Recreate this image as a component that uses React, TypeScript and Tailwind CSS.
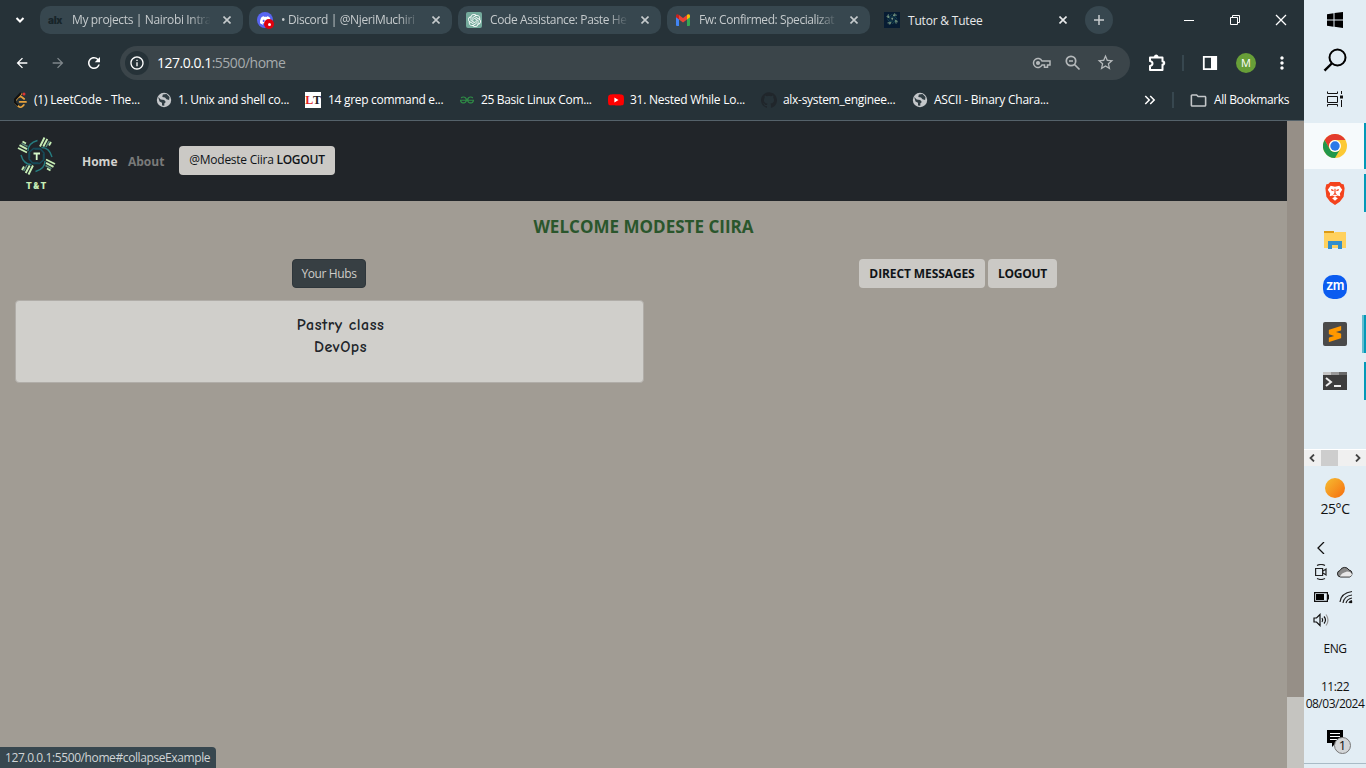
import React from "react";
import { MdArrowBack, MdArrowForward, MdRefresh, MdOutlineInfo, MdStarBorder, MdMoreVert, MdOutlineFolder, MdKeyboardDoubleArrowRight } from "react-icons/md";
import { SiGithub, SiYoutube, SiOpenai, SiDiscord, SiGeeksforgeeks, SiLeetcode, SiSublimetext } from "react-icons/si";

const Cross = ({ className = "" }: { className?: string }) => (
  <svg viewBox="0 0 8 8" className={`h-2 w-2 shrink-0 ${className}`} stroke="currentColor" strokeWidth="1.6" fill="none">
    <path d="M.5.5l7 7M7.5.5l-7 7" />
  </svg>
);

const Gmail = () => (
  <svg viewBox="0 0 16 12" className="h-3 w-4">
    <path d="M1 2v9a1 1 0 0 0 1 1h2V5z" fill="#4285f4" />
    <path d="M12 12h2a1 1 0 0 0 1-1V2l-3 3z" fill="#34a853" />
    <path d="M12 1.5v4L15 3.300V1.800C15 .2 13.300-.4 12 .8z" fill="#fbbc04" />
    <path d="M4 5.500V1l4 3 4-3v4.500L8 8.500z" fill="#ea4335" />
    <path d="M1 1.800v1.500l3 2.200V1C2.700-.3 1 .2 1 1.800z" fill="#c5221f" />
  </svg>
);

const Logo = ({ className = "" }: { className?: string }) => (
  <svg viewBox="0 0 40 40" className={className} fill="none">
    {[0, 90, 180, 270].map((a) => (
      <g key={a} transform={`rotate(${a} 20.500 20)`}>
        <path d="M24 10.500l4.500-9M27.300 10.500l4-7.500M33 9.500l2-3.500" stroke="#c6edb5" strokeWidth="1.900" />
        <path d="M30 11l3.200-6" stroke="#5d8a7c" strokeWidth="1.500" />
        <path d="M12 15C12 9 16 6 21.500 4.500" stroke="#267d80" strokeWidth="1.400" />
        <path d="M13.500 22v-6l4-3.500H24" stroke="#174b59" strokeWidth="1.500" />
      </g>
    ))}
    <path d="M17.500 17.500h6.500M20.700 17.500V24" stroke="#d6f7c8" strokeWidth="1.800" />
  </svg>
);

const Chrome = () => (
  <svg viewBox="0 0 24 24" className="h-6 w-6">
    <circle cx="12" cy="12" r="12" fill="#fcc934" />
    <path d="M1.600 6A12 12 0 0 1 22.400 6H12a6 6 0 0 0-5.200 9z" fill="#e33b2e" />
    <path d="M1.600 6A12 12 0 0 0 12 24l5.200-9A6 6 0 0 1 6.800 15z" fill="#22974b" />
    <circle cx="12" cy="12" r="6" fill="#fff" />
    <circle cx="12" cy="12" r="4.700" fill="#2979e8" />
  </svg>
);

const Alx = () => <span className="w-4 font-['Inter'] text-[10px] font-black leading-none tracking-[-.3px] text-[#18252a]">alx</span>;
const DiscordIcon = () => (
  <span className="relative flex h-4 w-4 items-center justify-center rounded-full bg-[#5865f2]">
    <SiDiscord size={11} color="#fff" />
    <span className="absolute -bottom-px -right-px flex h-[10px] w-[10px] items-center justify-center rounded-full bg-[#e0000d]"><span className="h-[3px] w-[3px] rounded-full bg-white" /></span>
  </span>
);
const OpenAi = () => <span className="flex h-4 w-4 items-center justify-center rounded-[2px] bg-[#74aa9c]"><SiOpenai size={13} color="#fff" /></span>;

const tabs = [
  { icon: <Alx />, text: "My projects | Nairobi Intra", cls: "tracking-[-.35px]" },
  { icon: <DiscordIcon />, text: "• Discord | @NjeriMuchiri", cls: "tracking-[-.37px]" },
  { icon: <OpenAi />, text: "Code Assistance: Paste He", cls: "tracking-[-.38px]" },
  { icon: <Gmail />, text: "Fw: Confirmed: Specializat", cls: "tracking-[-.42px]" },
];

const Globe = () => (
  <svg viewBox="0 0 16 16" className="h-4 w-4">
    <circle cx="8" cy="8" r="7.200" fill="#c4c7ca" />
    <path d="M2.200 5l2.500 2.500 3.500.6 1.600 1.900-1.500 1.500v2.300L6 13.500v-2.700L3.500 9.500zM6.800 2.500L10.500 2l3 3-.4 3-2.600-.8L9 5.500 6.300 5z" fill="#303d43" />
  </svg>
);
const Leet = () => (
  <span className="relative flex h-4 w-4 items-center justify-center"><SiLeetcode size={15} color="#e7a33e" />
    <svg viewBox="0 0 16 16" className="absolute inset-0"><path d="M9 1L3 7.500v3l3 3" stroke="#111" strokeWidth="2" fill="none" /><circle cx="12" cy="2" r="1.500" fill="#d33" /></svg>
  </span>
);
const LT = () => <span className="flex h-4 w-4 items-center justify-center bg-white font-['Liberation_Serif'] text-[12px] font-bold leading-none text-[#222]"><span className="text-[#e21e1e]">L</span>T</span>;

const bookmarks = [
  { icon: <Leet />, text: "(1) LeetCode - The...", cls: "w-[144px] tracking-[-.2px]", gap: "mr-[6px]" },
  { icon: <Globe />, text: "1. Unix and shell co...", cls: "w-[149px] tracking-[-.28px]", gap: "mr-[6px]" },
  { icon: <LT />, text: "14 grep command e...", cls: "w-[154px] tracking-[-.3px]", gap: "mr-[7px]" },
  { icon: <SiGeeksforgeeks size={14} color="#2f8d46" />, text: "25 Basic Linux Com...", cls: "w-[149px] tracking-[-.33px]", gap: "mr-[6px]" },
  { icon: <SiYoutube size={16} color="#f00" className="bg-[linear-gradient(#fff,#fff)] bg-[length:6px_6px] bg-center bg-no-repeat" />, text: "31. Nested While Lo...", cls: "w-[153px] tracking-[-.24px]", gap: "mr-[6px]" },
  { icon: <SiGithub size={16} color="#20262b" />, text: "alx-system_enginee...", cls: "w-[151px] tracking-[-.3px]", gap: "mr-[6px]" },
  { icon: <Globe />, text: "ASCII - Binary Chara...", cls: "w-[150px] tracking-[-.23px]", gap: "mr-[6px]" },
];

function TabStrip() {
  return (
    <div className="flex h-10 items-center pl-3 text-[12px]">
      <svg viewBox="0 0 16 16" className="mr-3 h-4 w-4" fill="none" stroke="#fff" strokeWidth="2"><path d="M4.500 6L8 9.500 11.500 6" /></svg>
      <div className="flex gap-1.5">
        {tabs.map((t) => (
          <div key={t.text} className="flex h-7 w-[203px] items-center rounded-[10px] bg-[#37474f] pl-2 pr-3 text-[#c5cacc]">
            <span className="flex w-4 shrink-0 justify-center">{t.icon}</span>
            <span className={`ml-2 w-[140px] shrink-0 whitespace-nowrap [mask-image:linear-gradient(90deg,#000_84%,transparent_99%)] ${t.cls}`}>{t.text}</span>
            <Cross className="ml-auto" />
          </div>
        ))}
      </div>
      <div className="flex h-7 w-[215px] items-center pl-[14px] pr-4 text-[#e8eaeb]">
        <span className="h-4 w-4 bg-[#071c33] pt-px"><Logo className="mx-auto h-3 w-3" /></span>
        <span className="ml-2 pt-px tracking-[-.2px]">Tutor &amp; Tutee</span>
        <Cross className="ml-auto mr-[2px]" />
      </div>
      <div className="flex h-7 w-7 items-center justify-center rounded-full bg-[#37474f]">
        <svg viewBox="0 0 10 10" className="h-2.5 w-2.5" stroke="#c9cdcf" strokeWidth="1.500"><path d="M5 0v10M0 5h10" /></svg>
      </div>
      <svg viewBox="0 0 104 12" className="ml-[71px] h-3 w-[104px]" fill="none" stroke="#fff"><path d="M0 6.500h10M46.500 3.500h7v7h-7zM48.500 3.500v-2h7v7h-2" /><path d="M92 1l10 10M102 1l-10 10" strokeWidth="1.300" /></svg>
    </div>
  );
}

function Toolbar() {
  return (
    <div className="flex h-[46px] items-center pl-[14px]">
      <MdArrowBack size={16} color="#fff" stroke="#fff" />
      <MdArrowForward size={16} color="#7f878b" className="ml-5" />
      <MdRefresh size={18} color="#fff" className="ml-[19px]" />
      <div className="ml-[17px] flex h-[34px] w-[1010px] items-center rounded-full bg-[#3b454a] pl-[5px] pr-[15px]">
        <span className="flex h-6 w-6 items-center justify-center rounded-full bg-[#263238]"><MdOutlineInfo size={16} color="#fff" /></span>
        <span className="-mt-px ml-2 text-[14px] tracking-[-.49px] text-[#a6abad]"><span className="text-white">127.0.0.1</span>:5500/home</span>
        <svg viewBox="0 0 20 12" className="ml-auto h-3 w-5" fill="none" stroke="#b5b9bb" strokeWidth="1.500"><path d="M10 4A4.500 4.500 0 1 0 10 8h2.500v2.200h3V8H18V4z" /><circle cx="6" cy="6" r="1.300" fill="#b5b9bb" /></svg>
        <svg viewBox="0 0 16 16" className="ml-[13px] h-4 w-4" fill="none" stroke="#b5b9bb" strokeWidth="1.700"><circle cx="6" cy="6" r="4.700" /><path d="M9.500 9.500l5 5M4 6h4" /></svg>
        <MdStarBorder size={19} color="#b5b9bb" className="-mt-px ml-[15px]" />
      </div>
      <svg viewBox="0 0 18 18" className="ml-[18px] h-[18px] w-[18px]" fill="none" stroke="#fff" strokeWidth="2"><path d="M2 3.500h12.500v4h1q1.500 1.500 0 3h-1v5.500H2v-4q2.500-.5 2.500-2.500T2 7z" strokeLinejoin="round" /><path d="M6.500 3q1.700-3 3.400 0" fill="#fff" /></svg>
      <span className="ml-4 h-4 w-0.5 bg-[#37474f]" />
      <svg viewBox="0 0 16 16" className="ml-[18px] h-4 w-4"><path d="M1.800 1.800h12.400v12.400H1.800z" fill="none" stroke="#fff" strokeWidth="1.800" /><path d="M9 1h6v14H9z" fill="#fff" /></svg>
      <span className="ml-[18px] flex h-5 w-5 items-center justify-center rounded-full bg-[#689f38] text-[11px] text-white">M</span>
      <MdMoreVert size={20} color="#fff" className="ml-4" />
    </div>
  );
}

function Bookmarks() {
  return (
    <div className="flex h-[34px] items-center pb-[7px] pl-[12px] pt-px text-[12px] text-white">
      {bookmarks.map((b) => (
        <div key={b.text} className={`flex shrink-0 items-center whitespace-nowrap ${b.cls}`}>
          <span className={`flex w-4 shrink-0 justify-center ${b.gap}`}>{b.icon}</span>{b.text}
        </div>
      ))}
      <MdKeyboardDoubleArrowRight size={18} className="ml-[79px] shrink-0" />
      <span className="ml-[13px] h-4 w-0.5 shrink-0 bg-[#37474f]" />
      <MdOutlineFolder size={19} color="#c4c7c9" className="ml-[15px] shrink-0" />
      <span className="ml-[6px] whitespace-nowrap tracking-[-.38px]">All Bookmarks</span>
    </div>
  );
}

function Page() {
  return (
    <div className="flex h-[647px]">
      <main className="relative flex w-[1287px] flex-col bg-[#a19c94]">
        <nav className="flex h-20 items-center bg-[#212529]">
          <div className="ml-4 flex w-10 flex-col items-center pt-[5px]">
            <Logo className="h-10 w-10" />
            <span className="mt-[4px] h-3 pl-0.5 font-['Inter'] text-[8.500px] font-black leading-3 tracking-[1.700px] text-[#c6edb5]">T&amp;T</span>
          </div>
          <span className="ml-[26px] w-[46px] pt-0.5 text-[12px] font-bold text-[#d3d2cf]">Home</span>
          <span className="w-[51px] pt-0.5 text-[12px] font-bold text-[#797a79]">About</span>
          <button className="-mt-0.5 h-[29px] w-[156px] whitespace-nowrap rounded bg-[#cbc9c5] text-[12px] tracking-[-.26px] text-[#101418]">@Modeste Ciira <span className="font-semibold">LOGOUT</span></button>
        </nav>
        <h1 className="mt-[14px] text-center text-[17px] font-bold leading-6 tracking-[.02px] text-[#2a562c]">WELCOME MODESTE CIIRA</h1>
        <div className="mt-5 flex h-[29px]">
          <button className="ml-[292px] w-[74px] whitespace-nowrap rounded border border-[#2e363b] bg-[#373f43] text-[12px] tracking-[-.37px] text-[#cfcdc9]">Your Hubs</button>
          <button className="ml-[493px] w-[126px] whitespace-nowrap rounded bg-[#cbc9c5] text-[12px] font-bold tracking-[-.1px] text-[#101418]">DIRECT MESSAGES</button>
          <button className="ml-[3px] w-[69px] rounded bg-[#cbc9c5] text-[12px] font-bold tracking-[-.3px] text-[#101418]">LOGOUT</button>
        </div>
        <section className="ml-[15px] mt-3 h-[83px] w-[629px] rounded border border-[#b0ada8] bg-[#d0cfcb] pl-[22px] pt-[13px] text-center font-['Comic_Neue','Comic_Sans_MS','Lato',sans-serif] text-[16px] font-bold leading-[22px] tracking-[.5px] text-[#212529]">
          <p>Pastry class</p>
          <p>DevOps</p>
        </section>
        <div className="absolute bottom-0 left-0 flex h-[21px] w-[216px] items-center whitespace-nowrap rounded-tr bg-[#37474f] pl-[5px] text-[12px] tracking-[-.4px] text-[#d0d4d6]">127.0.0.1:5500/home#collapseExample</div>
      </main>
      <div className="flex w-[17px] flex-col justify-end bg-[#968f87]"><div className="h-[71px] bg-[#c5c4c0]" /></div>
    </div>
  );
}

const Row = ({ children, className = "" }: { children: React.ReactNode; className?: string }) => (
  <div className={`flex w-[62px] shrink-0 items-center justify-center ${className}`}>{children}</div>
);

function Taskbar() {
  return (
    <aside className="flex h-[768px] w-[62px] flex-col bg-[#e2edf4] text-[#111]">
      <Row className="h-10"><svg viewBox="0 0 16 16" className="h-4 w-4"><path d="M0 2.200l6.500-1V7.500H0zM7.500 1L16 0v7.500H7.500zM0 8.500h6.500v6.300L0 13.800zM7.500 8.500H16V16l-8.500-1.200z" /></svg></Row>
      <Row className="h-10"><svg viewBox="0 0 24 24" className="h-6 w-6" fill="none" stroke="#000" strokeWidth="2"><circle cx="14.500" cy="9.500" r="8" /><path d="M8.700 15.500L1.500 22.700" strokeWidth="2.400" /></svg></Row>
      <Row className="h-[43px] pb-[5px]"><svg viewBox="0 0 16 16" className="h-4 w-4" fill="none" stroke="#111"><path d="M.5.5v2h10v-2M.5 5.500h10v6H.5zM.5 15.500v-2h10v2M14.500 0v3M14.500 9v7" /><path d="M13 4.500h3v3h-3z" fill="#111" stroke="none" /></svg></Row>
      <Row className="h-[46px] border-r-2 border-[#0399b8] bg-[#f6fafc] pl-0.5"><Chrome /></Row>
      <Row className="mt-[5px] h-[38px] border-r-2 border-[#0399b8] pl-0.5">
        <svg viewBox="0 0 22 25" className="h-6 w-[22px]"><path d="M6 1h10l2 2 2 .5 1 4-1 9-4 5-5 3.500-5-3.500-4-5-1-9 1-4L4 3z" fill="#f4431d" /><path d="M6.500 5l4.500 1 4.500-1 3 4-2.500 4 .5 3-3-1-2.500 1.500L8.500 15l-3 1 .5-3-2.500-4zM8 18l3-1.500 3 1.500-3 2.500z" fill="#fff" /><path d="M7 9l2.500 1M15 9l-2.500 1M11 8v5l-1.500 1.500M11 13l1.500 1.500" stroke="#f4431d" strokeWidth="1.200" fill="none" /></svg>
      </Row>
      <Row className="h-[56px]"><svg viewBox="0 0 22 18" className="h-[18px] w-[22px]"><path d="M0 0h10v3h12v14H0z" fill="#dc9b16" /><path d="M0 2h10l1-1h11v16H0z" fill="#ffd15d" /><path d="M4 18v-8h14v8h-4v-4H8v4z" fill="#338fcd" /></svg></Row>
      <Row className="h-[38px]"><span className="flex h-6 w-6 items-center justify-center rounded-[10px] bg-[#0b5cf0] pb-0.5 font-['Inter'] text-[13px] font-semibold tracking-[-.6px] text-white">zm</span></Row>
      <Row className="mt-[9px] h-[38px] border-r-2 border-[#0399b8] pl-0.5 shadow-[inset_-2px_0_#62bed1]"><span className="flex h-6 w-6 items-center justify-center rounded-[2px] bg-[#4a4a4a]"><SiSublimetext size={16} color="#ff9800" /></span></Row>
      <Row className="mt-[9px] h-[38px] border-r-2 border-[#0399b8] pl-0.5"><svg viewBox="0 0 24 18" className="h-[18px] w-6"><path d="M0 0h24v18H0z" fill="#3d3d3d" /><path d="M0 0h8v3H0z" fill="#c5c5c5" /><path d="M8 0h8v3H8z" fill="#999" /><path d="M16 0h8v3h-8z" fill="#696969" /><path d="M3 6l5 4-5 4M11 14h7" stroke="#eee" strokeWidth="2" fill="none" /></svg></Row>
      <div className="mt-[49px] flex h-[17px] items-center justify-between border-t border-white bg-[#f0f0f0] px-[5px]">
        <svg viewBox="0 0 6 8" className="h-2 w-1.5" fill="none" stroke="#444" strokeWidth="1.800"><path d="M5 .5L1.500 4 5 7.500" /></svg>
        <span className="mr-3 h-4 w-[17px] bg-[#cdcdcd]" />
        <svg viewBox="0 0 6 8" className="h-2 w-1.5" fill="none" stroke="#444" strokeWidth="1.800"><path d="M1 .5L4.500 4 1 7.500" /></svg>
      </div>
      <Row className="mt-3"><span className="h-5 w-5 rounded-full bg-linear-to-br from-[#f4bd31] to-[#f56a0b]" /></Row>
      <Row className="h-5 text-[14px] tracking-[-.45px]">25°C</Row>
      <div className="mt-6 pl-[13px]"><svg viewBox="0 0 8 12" className="h-3 w-2" fill="none" stroke="#111" strokeWidth="1.300"><path d="M7 0L1 6l6 6" /></svg></div>
      <div className="mt-[9px] flex h-[18px] items-center pl-[11px]">
        <svg viewBox="0 0 12 16" className="h-4 w-3" fill="none" stroke="#222" strokeWidth="1.200"><path d="M2 1.500q4-2 8 0M2 14.500q4 2 8 0M.6 4.500h7v7h-7zM8 7l3-2v6L8 9" /></svg>
        <svg viewBox="0 0 16 12" className="ml-[10px] h-3 w-4"><path d="M3.500 11A3.300 3.300 0 0 1 3 4.500 5 5 0 0 1 12 4 3.600 3.600 0 0 1 12.500 11z" fill="#888" stroke="#222" /><path d="M3 10.500Q4 7 10 5.500q4 0 5 3-.5 2-2.500 2z" fill="#e8e8e8" /></svg>
      </div>
      <div className="mt-[7px] flex h-[18px] items-center pl-[10px]">
        <svg viewBox="0 0 15 10" className="h-2.5 w-[15px]"><path d="M.6.6h12.800v8.800H.6zM14 3h1v4h-1z" fill="none" stroke="#111" strokeWidth="1.200" /><path d="M2 2h8v6H2z" /></svg>
        <svg viewBox="0 0 14 14" className="ml-[10px] h-3.5 w-3.5" fill="none" stroke="#222" strokeWidth="1.200"><path d="M1 12Q2 3 13 1.500M4 13q1-7 9-8M7 13q1-4 6-5M10 13q.5-2 3-2.500" /><circle cx="12" cy="12" r="1.300" fill="#111" stroke="none" /></svg>
      </div>
      <div className="mt-[7px] h-4 pl-[9px]"><svg viewBox="0 0 16 14" className="h-3.5 w-4" fill="none" stroke="#111" strokeWidth="1.200"><path d="M1 5h2.500L7 1.500v11L3.500 9H1zM9 5q1.500 2 0 4M11 3.500q3 3.500 0 7" /><path d="M13 1.500q4 5.500 0 11" stroke="#999" /></svg></div>
      <Row className="mt-[11px] h-5 text-[12px] tracking-[-.4px]">ENG</Row>
      <Row className="mt-[19px] h-[17px] text-[12px] tracking-[-.5px]">11:22</Row>
      <Row className="h-[17px] whitespace-nowrap text-[12px] tracking-[-.5px]">08/03/2024</Row>
      <div className="relative ml-[23px] mt-[18px] h-[33px]">
        <svg viewBox="0 0 25 24" className="h-6 w-[25px]"><path d="M0 0h16v13H9l-4 4v-4H0z" fill="#000" /><path d="M3 3.500h10M3 6.500h10M3 9.500h7" stroke="#fff" /></svg>
        <span className="absolute left-[7px] top-[7px] flex h-[17px] w-[17px] items-center justify-center rounded-full border border-[#777] bg-[#d3d6d8] text-[13px] leading-none">1</span>
      </div>
      <div className="mt-auto h-[5px] border-t border-[#a9bbc6]" />
    </aside>
  );
}

export default function App() {
  return (
    <div className="flex h-[768px] w-[1366px] overflow-hidden font-['Open_Sans','Noto_Sans',sans-serif]">
      <div className="w-[1304px]">
        <header className="h-[121px] border-b border-[#55626a] bg-[#263238]">
          <TabStrip />
          <Toolbar />
          <Bookmarks />
        </header>
        <Page />
      </div>
      <Taskbar />
    </div>
  );
}
